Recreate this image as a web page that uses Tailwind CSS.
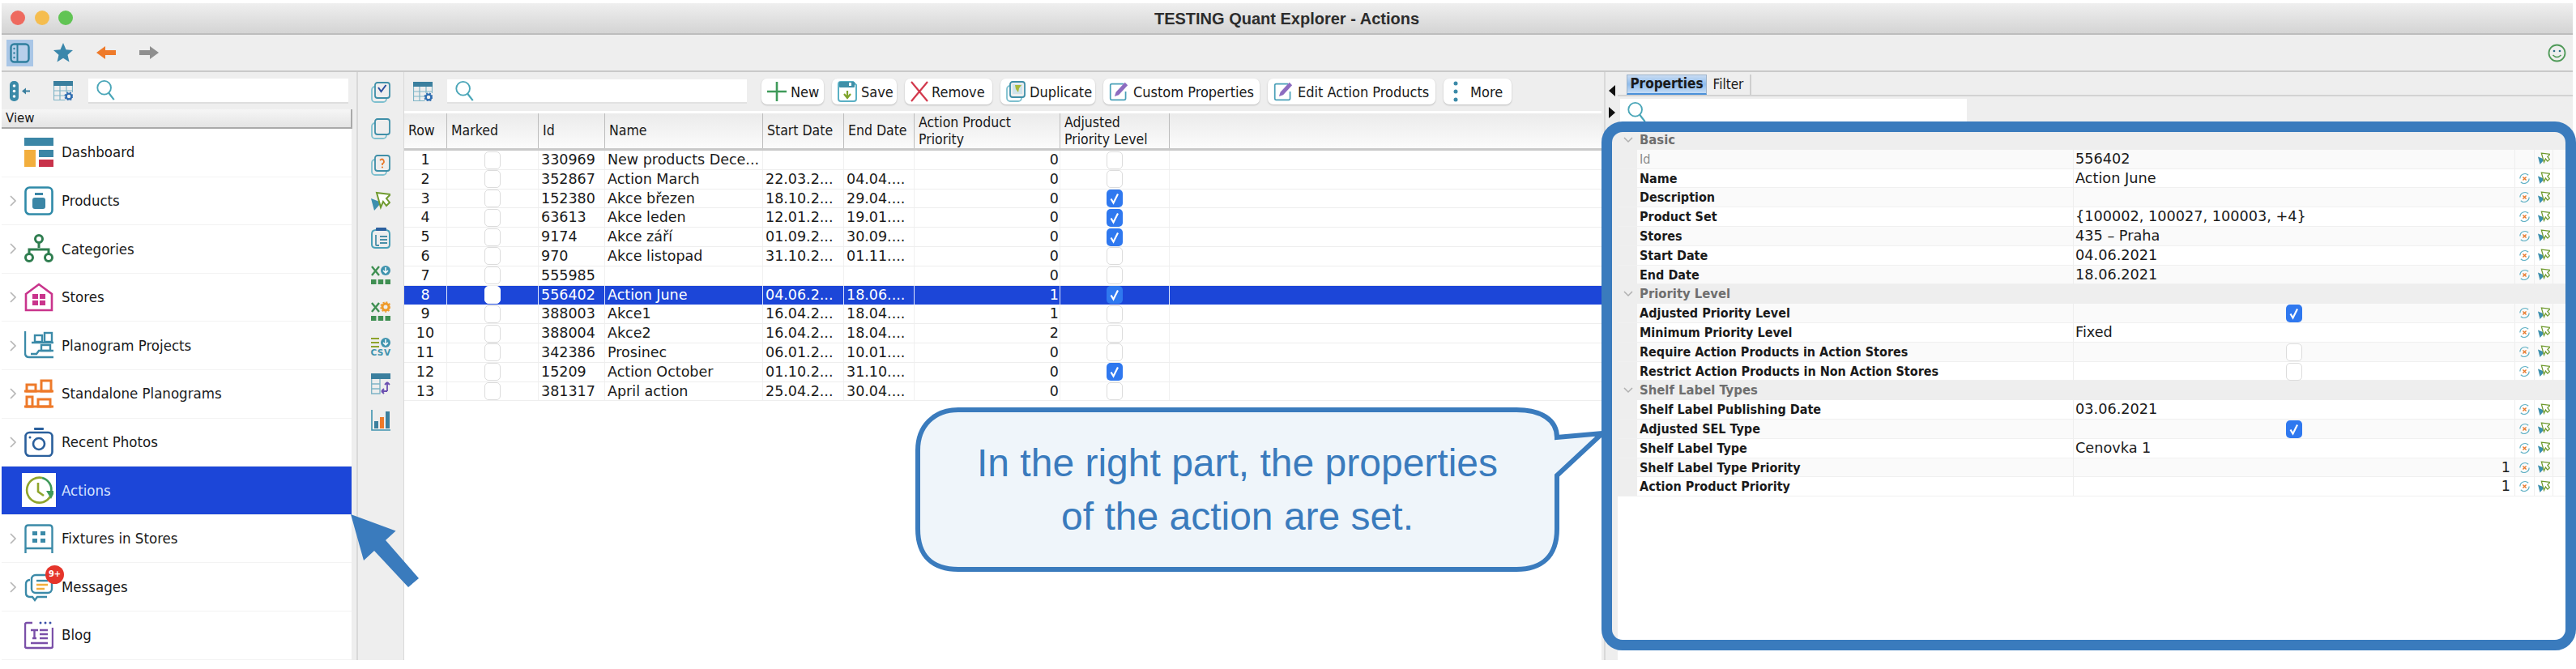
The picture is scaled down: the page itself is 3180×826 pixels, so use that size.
<!DOCTYPE html>
<html lang="en">
<head>
<meta charset="UTF-8">
<title>TESTING Quant Explorer - Actions</title>
<script src="https://cdn.jsdelivr.net/npm/@tailwindcss/browser@4"></script>
</head>
<body class="bg-white w-[3180px] h-[826px] overflow-hidden relative font-['DejaVu_Sans',sans-serif] text-[#1a1a1a]">

<!-- shared icons -->
<svg class="hidden">
  <symbol id="search" viewBox="0 0 26 28"><circle cx="11" cy="11" r="9" fill="none" stroke="#4aa6b8" stroke-width="2"/><path d="M17 18l7 9" stroke="#4aa6b8" stroke-width="2.4" fill="none"/></symbol>
  <symbol id="tablegear" viewBox="0 0 24 24"><rect x="0" y="0" width="24" height="6" fill="#3b7f9e"/><path d="M.5 6v17.500h14M.5 12h23M.5 18h14M8 6v17.500M16 6v8M23.500 6v8" fill="none" stroke="#7fb4c6" stroke-width="1.200"/><circle cx="19" cy="19" r="3.400" fill="none" stroke="#2f6db0" stroke-width="2.400"/><circle cx="19" cy="19" r="5" fill="none" stroke="#2f6db0" stroke-width="1.200" stroke-dasharray="2 2"/></symbol>
  <symbol id="cursor" viewBox="0 0 24 24"><path d="M0 8l13 5-9 10z" fill="#3c8fae"/><path d="M7 1l17 2-5 5 4 5-4 4-4-5-3 7z" fill="#fff" stroke="#6f9a2e" stroke-width="2"/></symbol>
  <symbol id="reset" viewBox="0 0 16 16"><path d="M13 3.500A6.500 6.500 0 0 0 2 8" fill="none" stroke="#5fb0c4" stroke-width="1.300"/><path d="M3 12.500A6.500 6.500 0 0 0 14 8" fill="none" stroke="#5fb0c4" stroke-width="1.300"/><path d="M5.800 5.800l4.400 4.400M10.200 5.800l-4.400 4.400" stroke="#e8792b" stroke-width="1.500"/></symbol>
  <symbol id="pages" viewBox="0 0 24 26"><rect x="1" y="6" width="18" height="19" rx="4" fill="none" stroke="#7fc0cf" stroke-width="1.800"/><rect x="5" y="1" width="18" height="19" rx="3" fill="#eee" stroke="#3f8fa8" stroke-width="1.800"/></symbol>
  <symbol id="xo" viewBox="0 0 24 26"><path d="M1 3l9 11M10 3L1 14" stroke="#3f8f52" stroke-width="2.400" fill="none"/><rect x="0" y="19" width="6.500" height="6" fill="#3f8f52"/><rect x="8.700" y="19" width="6.500" height="6" fill="#3f8f52"/><rect x="17.500" y="19" width="6.500" height="6" fill="#3f8f52"/></symbol>
  <symbol id="pencil" viewBox="0 0 28 28"><path d="M21 3H4q-2 0-2 2v19q0 2 2 2h18q2 0 2-2V14" fill="none" stroke="#4aa0b8" stroke-width="2"/><path d="M8 21l2-6L23 1l4 4-13 14z" fill="#8d6cc0"/></symbol>
  <symbol id="tick" viewBox="0 0 20 22"><rect x="0" y="0" width="20" height="22" rx="5" fill="#2f78ef"/><path d="M5.500 11.500l3 5 5.500-11" fill="none" stroke="#fff" stroke-width="2.200"/></symbol>
</svg>

<!-- window -->
<div class="pt-[4px] pl-[2px] pr-[4px]">

  <!-- title bar -->
  <div class="h-[39px] bg-gradient-to-b from-[#efefef] to-[#d4d4d4] border-b-2 border-[#bdbdbd] relative flex items-center justify-center">
    <div class="absolute left-[11px] top-[9px] flex gap-[11.500px]">
      <span class="w-[18px] h-[18px] rounded-full bg-[#ee6a5f]"></span>
      <span class="w-[18px] h-[18px] rounded-full bg-[#f5bd4f]"></span>
      <span class="w-[18px] h-[18px] rounded-full bg-[#61c454]"></span>
    </div>
    <span class="font-['Liberation_Sans',sans-serif] font-bold text-[20px] text-[#2c2c2c] ml-[-1px]">TESTING Quant Explorer - Actions</span>
  </div>

  <!-- main toolbar -->
  <div class="h-[46px] bg-[#eeeeee] border-b-2 border-[#c9c9c9] flex items-center pl-[6px] pr-[8px]">
    <div class="w-[33px] h-[33px] bg-[#a9c6e6] flex items-center justify-center">
      <svg class="w-[25px] h-[25px]" viewBox="0 0 25 25"><rect x="1.500" y="1.500" width="22" height="22" rx="4" fill="#b7cfea" stroke="#2f7f9e" stroke-width="2.400"/><path d="M9.500 2v21" stroke="#2f7f9e" stroke-width="2"/><circle cx="5.500" cy="7" r="1.200" fill="#2f7f9e"/><circle cx="5.500" cy="12.500" r="1.200" fill="#2f7f9e"/><circle cx="5.500" cy="18" r="1.200" fill="#2f7f9e"/></svg>
    </div>
    <svg class="w-[24px] h-[24px] ml-[25px]" viewBox="0 0 24 24"><path d="M12 0l3.500 8.300 8.500.7-6.500 5.700 2 8.800L12 18.800 4.500 23.500l2-8.800L0 9l8.500-.7z" fill="#3a87ab"/></svg>
    <svg class="w-[24px] h-[16px] ml-[29px]" viewBox="0 0 24 16"><path d="M0 8l11-8v5h13v6H11v5z" fill="#ee7a2a"/></svg>
    <svg class="w-[24px] h-[16px] ml-[29px]" viewBox="0 0 24 16"><path d="M24 8L13 0v5H0v6h13v5z" fill="#8f8f8f"/></svg>
    <svg class="w-[23px] h-[25px] ml-auto" viewBox="0 0 23 25"><circle cx="11.500" cy="12.500" r="10" fill="none" stroke="#4f9a58" stroke-width="1.800"/><circle cx="8" cy="10" r="1.300" fill="#2f6f8a"/><circle cx="15" cy="10" r="1.300" fill="#2f6f8a"/><path d="M6.500 15q5 5 10 0" fill="none" stroke="#4f9a58" stroke-width="1.600"/></svg>
  </div>

  <!-- work area -->
  <div class="flex h-[726px] bg-[#eeeeee]">

    <!-- left tree panel -->
    <div class="w-[440px] shrink-0 border-r-2 border-[#d9d9d9]">
      <div class="h-[46px] flex items-center pl-[10px]">
        <svg class="w-[25px] h-[25px]" viewBox="0 0 25 25"><rect x="0" y="0" width="11" height="25" rx="5" fill="#3b8aa8"/><circle cx="5.500" cy="6" r="1.800" fill="#fff"/><circle cx="5.500" cy="12.500" r="1.800" fill="#fff"/><circle cx="5.500" cy="19" r="1.800" fill="#fff"/><path d="M15 12.500l5-4v3h5v2h-5v3z" fill="#3b7f9e"/></svg>
        <svg class="w-[24px] h-[24px] ml-[29px]"><use href="#tablegear"/></svg>
        <div class="ml-[19px] w-[321px] h-[31px] bg-white border-b-2 border-[#dedede] flex items-center pl-[9px]">
          <svg class="w-[25px] h-[26px]"><use href="#search"/></svg>
        </div>
      </div>
      <div class="h-[24px] w-[433px] bg-gradient-to-b from-[#f6f6f6] to-[#e4e4e4] border-b-2 border-r-2 border-[#a9a9a9] flex items-center pl-[5px] text-[15px]">View</div>
      <div id="tree" class="w-[432px] bg-white"></div>
    </div>

    <!-- vertical icon strip -->
    <div class="w-[57px] shrink-0 flex flex-col items-center pt-[12px] gap-[19px] border-r border-[#d9d9d9]">
      <svg class="w-[24px] h-[26px]" viewBox="0 0 24 26"><use href="#pages"/><path d="M9 7l3.500 5 6-8" fill="none" stroke="#2b4f9e" stroke-width="2"/></svg>
      <svg class="w-[24px] h-[26px]"><use href="#pages"/></svg>
      <svg class="w-[24px] h-[26px]" viewBox="0 0 24 26"><use href="#pages"/><path d="M11 7q3-3 4.500 0t-1.500 4v2" fill="none" stroke="#e8792b" stroke-width="1.800"/><circle cx="14" cy="15.500" r="1.100" fill="#e8792b"/></svg>
      <svg class="w-[24px] h-[26px]"><use href="#cursor"/></svg>
      <svg class="w-[24px] h-[26px]" viewBox="0 0 24 26"><path d="M6 3h12q5 0 5 5v13q0 4-4 4H6q-5 0-5-4V8q0-5 5-5z" fill="none" stroke="#4aa0b8" stroke-width="2"/><rect x="6" y="0" width="13" height="4" rx="1" fill="#2b5f9e"/><path d="M11 11h9M11 15h9M11 19h9M6 9v12q0 1 1 1h3" fill="none" stroke="#4a8fa8" stroke-width="1.800"/></svg>
      <svg class="w-[24px] h-[26px]" viewBox="0 0 24 26"><use href="#xo"/><circle cx="18" cy="8" r="6" fill="#3f93ae"/><path d="M18 4v6m-3-2l3 3 3-3" stroke="#fff" stroke-width="1.500" fill="none"/></svg>
      <svg class="w-[24px] h-[26px]" viewBox="0 0 24 26"><use href="#xo"/><circle cx="18" cy="8" r="4" fill="none" stroke="#ee9a2a" stroke-width="3"/><circle cx="18" cy="8" r="6" fill="none" stroke="#ee9a2a" stroke-width="1.500" stroke-dasharray="2 2"/></svg>
      <div class="w-[24px] h-[26px] flex flex-col items-center relative">
        <svg class="w-[24px] h-[14px]" viewBox="0 0 24 14"><path d="M0 2h10M0 7h10M0 12h10" stroke="#8ea32c" stroke-width="2.200"/><circle cx="18" cy="7" r="6" fill="#3f93ae"/><path d="M18 3v6m-3-2l3 3 3-3" stroke="#fff" stroke-width="1.500" fill="none"/></svg>
        <span class="text-[10.500px] font-bold leading-[11px] text-[#3f93ae] tracking-[0.5px]">CSV</span>
      </div>
      <svg class="w-[24px] h-[26px]" viewBox="0 0 24 26"><rect width="24" height="7" fill="#3b7f9e"/><path d="M.7 7v18h10.300V7M.7 13h10M.7 19h10" fill="none" stroke="#7fb4c6" stroke-width="1.400"/><path d="M20 22h-7m0 0l3-3m-3 3l3 3M20 22V11m0 0l-3 3m3-3l3 3" fill="none" stroke="#6b4fb0" stroke-width="1.800"/></svg>
      <svg class="w-[24px] h-[26px]" viewBox="0 0 24 26"><path d="M1 0v25h23" fill="none" stroke="#3f93ae" stroke-width="1.600"/><rect x="4" y="14" width="5" height="9" fill="#3b7f9e"/><rect x="11" y="9" width="5" height="14" fill="#ee7a2a"/><rect x="18" y="2" width="5" height="21" fill="#3b7f9e"/></svg>
    </div>

    <!-- center: toolbar and table -->
    <div class="w-[1478px] shrink-0 flex flex-col">
      <div class="h-[48px] flex items-center pl-[11px] font-['DejaVu_Sans_Condensed','DejaVu_Sans',sans-serif] text-[18px]">
        <svg class="w-[24px] h-[24px]"><use href="#tablegear"/></svg>
        <div class="ml-[18px] w-[370px] h-[30px] bg-white border-b-2 border-[#e2e2e2] flex items-center pl-[9px]">
          <svg class="w-[25px] h-[26px]"><use href="#search"/></svg>
        </div>
        <div class="ml-[18px] flex gap-[10px]">
          <div class="w-[77px] h-[32px] bg-white rounded-[7px] shadow-[0_1px_2px_#bbb] flex items-center pl-[7px] gap-[5px]">
            <svg class="w-[24px] h-[24px]" viewBox="0 0 24 24"><path d="M12 0v24M0 12h24" stroke="#3f9a5a" stroke-width="2.600"/></svg>New
          </div>
          <div class="w-[80px] h-[32px] bg-white rounded-[7px] shadow-[0_1px_2px_#bbb] flex items-center pl-[7px] gap-[5px]">
            <svg class="w-[24px] h-[26px]" viewBox="0 0 24 26"><path d="M4 1h15l4 4v17q0 3-3 3H4q-3 0-3-3V4q0-3 3-3z" fill="none" stroke="#5ab0c4" stroke-width="2"/><rect x="2" y="1" width="19" height="7" rx="1" fill="#3f8fa8"/><rect x="14" y="2" width="3" height="4" fill="#fff"/><path d="M12 12v8m-4-4l4 5 4-5" fill="none" stroke="#7fa32c" stroke-width="2.200"/></svg>Save
          </div>
          <div class="w-[108px] h-[32px] bg-white rounded-[7px] shadow-[0_1px_2px_#bbb] flex items-center pl-[7px] gap-[4px]">
            <svg class="w-[22px] h-[26px]" viewBox="0 0 22 26"><path d="M1 1l20 24M21 1L1 25" stroke="#d2384c" stroke-width="2.200"/></svg>Remove
          </div>
          <div class="w-[117px] h-[32px] bg-white rounded-[7px] shadow-[0_1px_2px_#bbb] flex items-center pl-[7px] gap-[5px]">
            <svg class="w-[24px] h-[26px]" viewBox="0 0 24 26"><use href="#pages"/><rect x="8" y="4" width="12" height="12" fill="#cfe3ea"/><path d="M11 5h8l-3 4-1 5-3-4z" fill="#a8b83a"/></svg>Duplicate
          </div>
          <div class="w-[193px] h-[32px] bg-white rounded-[7px] shadow-[0_1px_2px_#bbb] flex items-center pl-[7px] gap-[6px]">
            <svg class="w-[24px] h-[26px]"><use href="#pencil"/></svg>Custom Properties
          </div>
          <div class="w-[207px] h-[32px] bg-white rounded-[7px] shadow-[0_1px_2px_#bbb] flex items-center pl-[7px] gap-[6px]">
            <svg class="w-[24px] h-[26px]"><use href="#pencil"/></svg>Edit Action Products
          </div>
          <div class="w-[84px] h-[32px] bg-white rounded-[7px] shadow-[0_1px_2px_#bbb] flex items-center pl-[12px] gap-[15px]">
            <svg class="w-[6px] h-[26px]" viewBox="0 0 6 26"><circle cx="3" cy="3" r="2.500" fill="#3b8aa8"/><circle cx="3" cy="13" r="2.500" fill="#3b8aa8"/><circle cx="3" cy="23" r="2.500" fill="#3b8aa8"/></svg>More
          </div>
        </div>
      </div>
      <div class="flex-1 bg-white pt-[3px]">
        <div class="h-[46px] grid grid-cols-[53px_113px_82px_195px_100px_87px_180px_135px_1fr] bg-gradient-to-b from-[#ebebeb] to-[#fbfbfb] border-b-[3px] border-[#c9c9c9] font-['DejaVu_Sans_Condensed','DejaVu_Sans',sans-serif] text-[17.500px] leading-[21px]">
          <div class="border-r border-[#bdbdbd] flex items-center pl-[5px]">Row</div>
          <div class="border-r border-[#bdbdbd] flex items-center pl-[5px]">Marked</div>
          <div class="border-r border-[#bdbdbd] flex items-center pl-[5px]">Id</div>
          <div class="border-r border-[#bdbdbd] flex items-center pl-[5px]">Name</div>
          <div class="border-r border-[#bdbdbd] flex items-center pl-[5px]">Start Date</div>
          <div class="border-r border-[#bdbdbd] flex items-center pl-[5px]">End Date</div>
          <div class="border-r border-[#bdbdbd] flex items-center pl-[5px]">Action Product<br>Priority</div>
          <div class="border-r border-[#bdbdbd] flex items-center pl-[5px]">Adjusted<br>Priority Level</div>
          <div></div>
        </div>
        <div id="rows"></div>
      </div>
    </div>

    <!-- right: properties -->
    <div class="flex-1 flex border-l-2 border-[#d9d9d9] ml-[3px]">
      <div class="w-[15px] shrink-0 flex flex-col items-center pt-[16px] gap-[13px]">
        <svg class="w-[8px] h-[14px]" viewBox="0 0 8 14"><path d="M8 0v14L0 7z" fill="#111"/></svg>
        <svg class="w-[8px] h-[14px]" viewBox="0 0 8 14"><path d="M0 0v14l8-7z" fill="#111"/></svg>
      </div>
      <div class="flex-1 flex flex-col">
        <div class="h-[30px] border-b-2 border-[#d2d2d2] flex items-end pl-[11px] font-['DejaVu_Sans_Condensed','DejaVu_Sans',sans-serif] text-[17px]">
          <div class="w-[99px] h-[25px] bg-gradient-to-b from-[#c9dcf2] via-[#8fbcec] to-[#c5dcf5] border border-[#9db4cc] border-b-2 border-b-[#4a90d9] flex items-center justify-center font-bold">Properties</div>
          <div class="w-[55px] h-[25px] border-r-2 border-[#cfcfcf] flex items-center justify-center">Filter</div>
        </div>
        <div class="h-[42px] pt-[3px] pl-[3px]">
          <div class="w-[428px] h-[32px] bg-white flex items-start pl-[8px] pt-[3px]">
            <svg class="w-[25px] h-[26px]"><use href="#search"/></svg>
          </div>
        </div>
        <div id="props" class="flex-1 bg-white"></div>
      </div>
    </div>
  </div>
</div>

<!-- annotations over the screenshot -->
<svg class="absolute left-[433px] top-[635px] w-[90px] h-[95px]" viewBox="433 635 90 95"><path d="M433 635l55.600 20.600L476 667l41 47-13 11-42-45-13 12z" fill="#3a7bbd"/></svg>

<div class="absolute left-[1130px] top-[503px] w-[795px] h-[203px] flex items-center justify-center text-center font-['Liberation_Sans',sans-serif] text-[48px] leading-[66px] text-[#3a7bbd]">
  <svg class="absolute inset-0 w-[795px] h-[203px] overflow-visible" viewBox="0 0 795 203"><path d="M53 3H742C772 3 792 15 792 37L848 32L792 84V150C792 185 772 200 742 200H53C23 200 3 185 3 150V53C3 23 23 3 53 3Z" fill="#eff5fa" stroke="#3a7bbd" stroke-width="6"/></svg>
  <span class="relative">In the right part, the properties<br>of the action are set.</span>
</div>

<div class="absolute left-[1977px] top-[150px] w-[1203px] h-[653px] border-[13px] border-[#3a7bbd] rounded-[26px]"></div>

<script>
const treeItems = [
  ['Dashboard', false, '<rect width="36" height="10" fill="#3b86a6"/><rect y="15" width="14" height="21" fill="#f2ae3d"/><rect x="18" y="15" width="18" height="9" fill="#3b86a6"/><rect x="18" y="27" width="18" height="9" fill="#c8324a"/>'],
  ['Products', true, '<rect x="1.500" y="1.500" width="33" height="33" rx="5" fill="none" stroke="#2f8aa8" stroke-width="2.600"/><rect x="13" y="8" width="10" height="3" fill="#3b86a6"/><rect x="10" y="14" width="16" height="14" rx="3" fill="#3b86a6"/>'],
  ['Categories', true, '<g fill="none" stroke="#2e7d4f" stroke-width="3"><circle cx="18" cy="6" r="4.500"/><circle cx="6" cy="29" r="4.500"/><circle cx="30" cy="29" r="4.500"/><path d="M18 11v6M6 24v-5h24v5"/></g>'],
  ['Stores', true, '<path d="M2 14L18 2l16 12v20H2z" fill="none" stroke="#c9348c" stroke-width="2.600"/><rect x="10" y="14" width="7" height="6" fill="#c9348c"/><rect x="19" y="14" width="7" height="6" fill="#c9348c"/><rect x="10" y="22" width="7" height="6" fill="#c9348c"/><rect x="19" y="22" width="7" height="6" fill="#c9348c"/>'],
  ['Planogram Projects', true, '<g fill="none" stroke="#3b8aa8" stroke-width="2.400"><path d="M1 0v27q0 5 5 5h30M8 28h7l3-4h18M9 14h27"/><rect x="13" y="5" width="9" height="8"/><rect x="25" y="2" width="9" height="11"/><rect x="21" y="17" width="11" height="7"/></g>'],
  ['Standalone Planograms', true, '<g fill="none" stroke="#ee7a2a" stroke-width="3"><path d="M0 15h36M0 34h36"/><rect x="3" y="7" width="11" height="8"/><rect x="21" y="2" width="12" height="13"/><rect x="3" y="22" width="7" height="12"/><rect x="17" y="25" width="15" height="9"/></g>'],
  ['Recent Photos', true, '<g fill="none" stroke="#2a5f9c" stroke-width="2.600"><rect x="1.500" y="6" width="33" height="29" rx="5"/><circle cx="18" cy="20" r="7"/></g><rect x="12" y="0" width="12" height="3" rx="1" fill="#2a5f9c"/><circle cx="7" cy="12" r="1.500" fill="#2a5f9c"/>'],
  ['Actions', false, '<g fill="none" stroke="#8fa52c" stroke-width="2.600"><path d="M22 3A15.500 15.500 0 1 0 32 26"/><path d="M17 9v11l7 5"/></g><path d="M22 3a15 15 0 0 1 11 18" fill="none" stroke="#3f9a5a" stroke-width="2.600"/><path d="M27 19h11l-5 10z" fill="#3f9a5a"/>'],
  ['Fixtures in Stores', true, '<g fill="none" stroke="#3b8aa8" stroke-width="2.400"><path d="M1.500 36V5q0-3.500 3.500-3.500h26q3.500 0 3.500 3.500v31M1.500 30h33"/></g><rect x="10" y="9" width="6" height="5" fill="#3b8aa8"/><rect x="20" y="9" width="6" height="5" fill="#3b8aa8"/><rect x="10" y="18" width="6" height="5" fill="#3b8aa8"/><rect x="20" y="18" width="6" height="5" fill="#3b8aa8"/>'],
  ['Messages', true, '<g fill="none" stroke="#3b8aa8" stroke-width="2.400"><path d="M7 9q-5 0-5 5v11q0 5 5 5h3l3 4 3-4h12"/><rect x="9" y="3" width="25" height="22" rx="5"/></g><path d="M15 10h14" stroke="#3b8aa8" stroke-width="2.400"/><path d="M15 15h14M15 20h10" stroke="#f2ae3d" stroke-width="2.400"/>'],
  ['Blog', false, '<g fill="none" stroke="#7a4fa8" stroke-width="2.400"><path d="M10 3H3q-2 0-2 2v27q0 2 2 2h30q2 0 2-2V9"/><path d="M8 28h21M19 12h10M19 17h10M19 22h10M8 12h9M12.500 12v10M10 22h5"/></g><circle cx="20" cy="3" r="1.500" fill="#3a4fa8"/><circle cx="26" cy="3" r="1.500" fill="#3a4fa8"/><circle cx="32" cy="3" r="1.500" fill="#3a4fa8"/>']
];

document.getElementById('tree').innerHTML = treeItems.map(([label, arrow, icon]) => {
  const selected = label === 'Actions';
  const chevron = arrow && !selected ? '<svg class="w-[9px] h-[14px] ml-[10px]" viewBox="0 0 9 14"><path d="M1 1l6 6-6 6" fill="none" stroke="#b5b5b5" stroke-width="1.600"/></svg>' : '';
  const badge = label === 'Messages' ? '<span class="absolute left-[26px] top-[-9px] w-[23px] h-[23px] rounded-full bg-[#e5352b] text-white text-[11px] font-bold flex items-center justify-center">9+</span>' : '';
  const svg = `<svg class="w-[36px] h-[36px]" viewBox="0 0 36 36">${icon}</svg>`;
  return `<div class="h-[59.600px] flex items-center border-b border-[#f3f3f3] font-['DejaVu_Sans_Condensed','DejaVu_Sans',sans-serif] text-[18.500px] ${selected ? 'bg-[#1c46d8] text-[#d5e3ff]' : 'bg-white'}">
    <div class="w-[28px] shrink-0">${chevron}</div>
    <div class="relative w-[36px] h-[36px] shrink-0 ${selected ? 'bg-white outline-[3px] outline-white' : ''}">${svg}${badge}</div>
    <span class="ml-[10px]">${label}</span>
  </div>`;
}).join('');

const rows = [
  [1, '330969', 'New products Dece...', '', '', 0, false],
  [2, '352867', 'Action March', '22.03.2...', '04.04....', 0, false],
  [3, '152380', 'Akce březen', '18.10.2...', '29.04....', 0, true],
  [4, '63613', 'Akce leden', '12.01.2...', '19.01....', 0, true],
  [5, '9174', 'Akce září', '01.09.2...', '30.09....', 0, true],
  [6, '970', 'Akce listopad', '31.10.2...', '01.11....', 0, false],
  [7, '555985', '', '', '', 0, false],
  [8, '556402', 'Action June', '04.06.2...', '18.06....', 1, true],
  [9, '388003', 'Akce1', '16.04.2...', '18.04....', 1, false],
  [10, '388004', 'Akce2', '16.04.2...', '18.04....', 2, false],
  [11, '342386', 'Prosinec', '06.01.2...', '10.01....', 0, false],
  [12, '15209', 'Action October', '01.10.2...', '31.10....', 0, true],
  [13, '381317', 'April action', '25.04.2...', '30.04....', 0, false]
];

const emptyBox = (sel) => `<span class="block w-[20px] h-[22px] rounded-[5px] border ${sel ? 'bg-white border-white' : 'bg-white border-[#dcdcdc]'}"></span>`;
const tickBox = '<svg class="w-[20px] h-[22px]"><use href="#tick"/></svg>';

document.getElementById('rows').innerHTML = rows.map(([n, id, name, start, end, prio, adj]) => {
  const sel = n === 8;
  const cell = sel ? 'border-r border-[#dfe6fb]' : 'border-r border-[#f0f0f0]';
  return `<div class="h-[23.800px] grid grid-cols-[53px_113px_82px_195px_100px_87px_180px_135px_1fr] items-stretch text-[17.500px] leading-[23px] whitespace-nowrap overflow-hidden ${sel ? 'bg-[#1c46d8] text-white' : 'bg-white border-b border-[#eeeeee]'}">
    <div class="${cell} text-center">${n}</div>
    <div class="${cell} flex items-center justify-center">${emptyBox(sel)}</div>
    <div class="${cell} pl-[3px]">${id}</div>
    <div class="${cell} pl-[3px]">${name}</div>
    <div class="${cell} pl-[3px]">${start}</div>
    <div class="${cell} pl-[3px]">${end}</div>
    <div class="${cell} text-right pr-[1px]">${prio}</div>
    <div class="${cell} flex items-center justify-start pl-[57px]">${adj ? tickBox : emptyBox(false)}</div>
    <div></div>
  </div>`;
}).join('');

const props = [
  ['g', 'Basic'],
  ['Id', '556402', 'text', true],
  ['Name', 'Action June'],
  ['Description', ''],
  ['Product Set', '{100002, 100027, 100003, +4}'],
  ['Stores', '435 – Praha'],
  ['Start Date', '04.06.2021'],
  ['End Date', '18.06.2021'],
  ['g', 'Priority Level'],
  ['Adjusted Priority Level', true, 'check'],
  ['Minimum Priority Level', 'Fixed'],
  ['Require Action Products in Action Stores', false, 'check'],
  ['Restrict Action Products in Non Action Stores', false, 'check'],
  ['g', 'Shelf Label Types'],
  ['Shelf Label Publishing Date', '03.06.2021'],
  ['Adjusted SEL Type', true, 'check'],
  ['Shelf Label Type', 'Cenovka 1'],
  ['Shelf Label Type Priority', '1', 'num'],
  ['Action Product Priority', '1', 'num']
];

document.getElementById('props').innerHTML = props.map((p, i) => {
  if (p[0] === 'g') {
    return `<div class="h-[23.800px] bg-[#eeeeee] flex items-center text-[16.500px] font-bold text-[#6e6e6e] font-['DejaVu_Sans_Condensed','DejaVu_Sans',sans-serif]">
      <svg class="w-[12px] h-[8px] ml-[7px] mr-[8px]" viewBox="0 0 12 8"><path d="M1 1l5 5 5-5" fill="none" stroke="#b0b0b0" stroke-width="1.500"/></svg>${p[1]}
    </div>`;
  }
  const [label, value, kind, readOnly] = p;
  let val = value;
  if (kind === 'check') {
    val = `<div class="flex justify-center pr-[1px] pt-[1px]">${value ? tickBox : emptyBox(false)}</div>`;
  } else if (kind === 'num') {
    val = `<div class="text-right pr-[5px]">${value}</div>`;
  } else {
    val = `<div class="pl-[2px]">${value}</div>`;
  }
  return `<div class="h-[23.800px] grid grid-cols-[24px_538px_546px_24px_23px_1fr] leading-[23px] border-b border-[#f0f0f0] ${i % 2 ? 'bg-[#fafafa]' : 'bg-white'}">
    <div class="bg-[#eeeeee]"></div>
    <div class="pl-[3px] text-[16px] font-bold font-['DejaVu_Sans_Condensed','DejaVu_Sans',sans-serif] ${readOnly ? 'text-[#8a8a8a] font-normal' : ''}">${label}</div>
    <div class="text-[17.700px] border-l border-r border-[#eeeeee]">${val}</div>
    <div class="border-r border-[#eeeeee] flex items-center justify-center">${readOnly ? '' : '<svg class="w-[15px] h-[15px]"><use href="#reset"/></svg>'}</div>
    <div class="border-r border-[#eeeeee] flex items-center justify-center"><svg class="w-[15px] h-[16px]"><use href="#cursor"/></svg></div>
    <div></div>
  </div>`;
}).join('');
</script>
</body>
</html>
